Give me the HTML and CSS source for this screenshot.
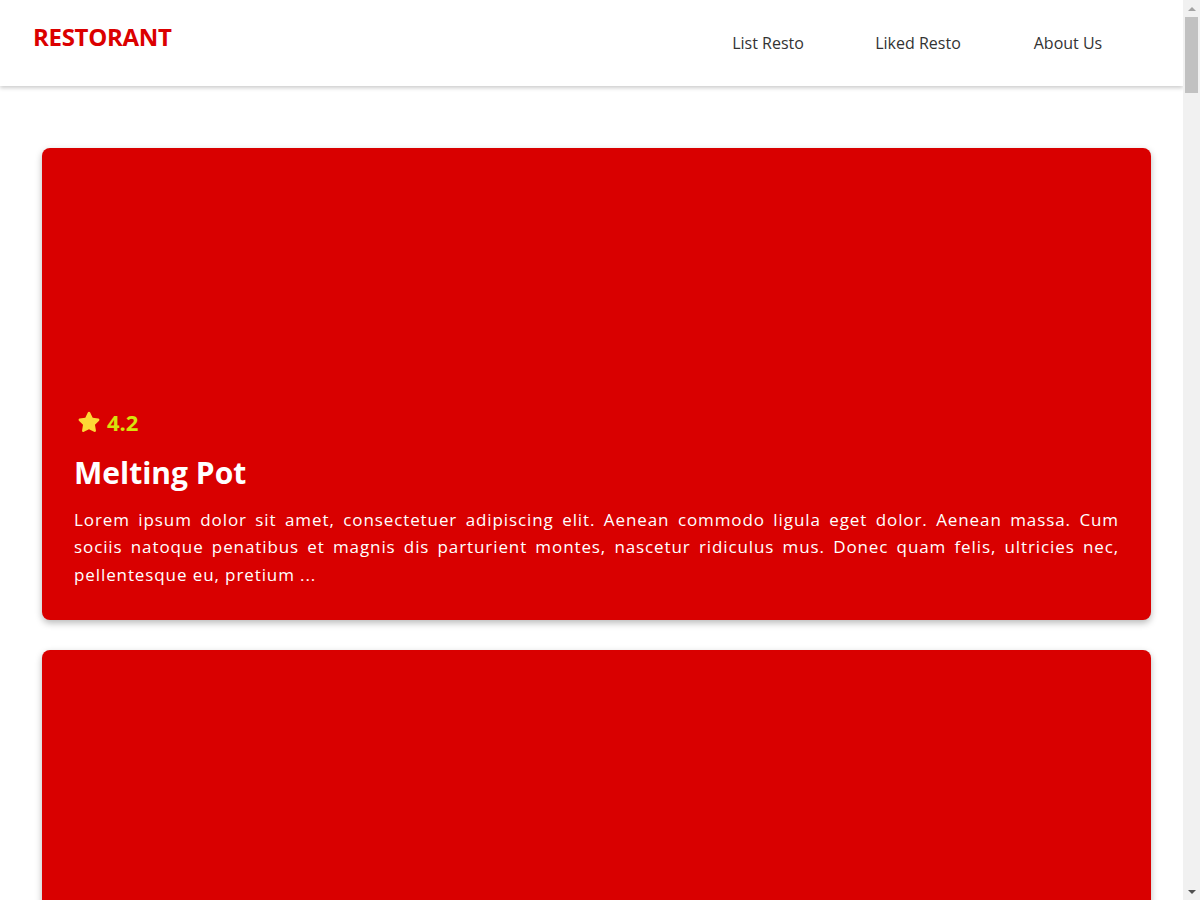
FILE: index.html
```html
<!DOCTYPE html>
<html lang="en">
<head>
<meta charset="utf-8">
<title>Restorant</title>
<link rel="stylesheet" href="styles.css">
</head>
<body>
<div class="viewport">
  <header class="app-bar">
    <a class="brand" href="#">RESTORANT</a>
    <nav class="nav">
      <a class="nav-link" href="#">List Resto</a>
      <a class="nav-link" href="#">Liked Resto</a>
      <a class="nav-link" href="#">About Us</a>
    </nav>
  </header>
  <main class="content">
    <article class="card">
      <div class="rating">
        <svg class="star" viewBox="0 0 24 24" aria-hidden="true"><path d="M12 2.6c.5 0 .9.3 1.1.7l2.3 4.8 5.2.7c1 .1 1.4 1.4.7 2.1l-3.8 3.7.9 5.2c.2 1-.9 1.7-1.7 1.3L12 18.6l-4.7 2.5c-.9.5-1.9-.3-1.7-1.3l.9-5.2-3.8-3.7c-.7-.7-.3-2 .7-2.1l5.2-.7 2.3-4.8c.2-.4.6-.7 1.1-.7z"/></svg>
        <span class="rating-value">4.2</span>
      </div>
      <h2 class="card-title">Melting Pot</h2>
      <p class="card-desc">
        <span class="line">Lorem ipsum dolor sit amet, consectetuer adipiscing elit. Aenean commodo ligula eget dolor. Aenean massa. Cum</span>
        <span class="line">sociis natoque penatibus et magnis dis parturient montes, nascetur ridiculus mus. Donec quam felis, ultricies nec,</span>
        <span class="line last">pellentesque eu, pretium ...</span>
      </p>
    </article>
    <article class="card card-next" aria-label="Next restaurant"></article>
  </main>
</div>
<div class="scrollbar" aria-hidden="true">
  <span class="sb-arrow sb-up"></span>
  <span class="sb-thumb"></span>
  <span class="sb-arrow sb-down"></span>
</div>
</body>
</html>
```

FILE: styles.css
```css
* { box-sizing: border-box; }

html {
  height: 100%;
}

body {
  height: 100%;
  margin: 0;
  padding: 0;
  display: flex;
  overflow: hidden;
  background: #ffffff;
  font-family: "Open Sans", "Liberation Sans", sans-serif;
  color: #222;
}

.viewport {
  flex: 1;
  min-width: 0;
  height: 100%;
  overflow: hidden;
}

.scrollbar {
  width: 17px;
  flex: none;
  height: 100%;
  background: #f1f1f1;
  display: flex;
  flex-direction: column;
  align-items: center;
}

.sb-arrow {
  flex: none;
  height: 17px;
  width: 17px;
  display: flex;
  align-items: center;
  justify-content: center;
}

.sb-arrow::before {
  content: "";
  width: 0;
  height: 0;
  border-left: 4px solid transparent;
  border-right: 4px solid transparent;
}

.sb-up::before {
  border-bottom: 4px solid #a3a3a3;
}

.sb-down {
  margin-top: auto;
}

.sb-down::before {
  border-top: 4px solid #505050;
}

.sb-thumb {
  width: 13px;
  height: 76px;
  background: #c1c1c1;
}

.app-bar {
  height: 86px;
  display: flex;
  align-items: stretch;
  justify-content: space-between;
  padding: 0 40px 0 33px;
  background: #fff;
  box-shadow: 0 2px 4px rgba(0, 0, 0, 0.2);
  position: relative;
  z-index: 1;
}

.brand {
  font-size: 24px;
  font-weight: 700;
  color: #db0000;
  text-decoration: none;
  line-height: 1;
  padding-top: 25px;
  letter-spacing: -0.3px;
}

.nav {
  display: flex;
  align-items: center;
}

.nav-link {
  width: 150px;
  text-align: center;
  font-size: 16px;
  color: #333;
  text-decoration: none;
}

.content {
  display: flex;
  flex-direction: column;
  gap: 30px;
  padding: 62px 32px 60px 42px;
}

.card {
  min-height: 472px;
  background: #d90000;
  border-radius: 8px;
  box-shadow: 0 3px 7px rgba(0, 0, 0, 0.28);
  padding: 0 32px 32px 32px;
  display: flex;
  flex-direction: column;
  justify-content: flex-end;
  color: #fff;
}

.rating {
  display: flex;
  align-items: center;
  gap: 5px;
  height: 24px;
}

.star {
  width: 26px;
  height: 26px;
  fill: #fdd835;
  margin-left: 2px;
}

.rating-value {
  font-size: 22px;
  font-weight: 700;
  color: #d7e20c;
  line-height: 1;
}

.card-title {
  margin: 16px 0 11px;
  font-size: 30px;
  font-weight: 700;
  line-height: 45px;
}

.card-desc {
  margin: 0;
  font-size: 17px;
  line-height: 27.5px;
  letter-spacing: 0.9px;
}

.line {
  display: block;
  text-align: justify;
  text-align-last: justify;
  white-space: nowrap;
}

.line.last {
  text-align-last: left;
}
```
